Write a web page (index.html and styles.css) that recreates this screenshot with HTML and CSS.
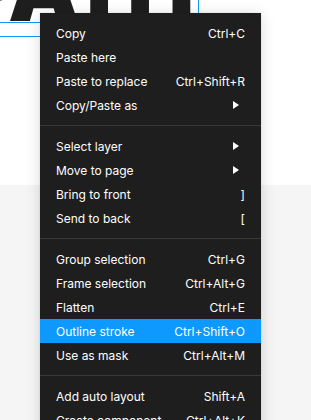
FILE: index.html
```html
<!DOCTYPE html>
<html lang="en">
<head>
    <meta charset="UTF-8">
    <meta name="viewport" content="width=device-width, initial-scale=1.0">
    <title>Context menu</title>
    <link rel="stylesheet" href="styles.css">
</head>
<body>
    <div class="frame">
        <div class="layer-text">PATH</div>
        <div class="selection"></div>
        <div class="baseline"></div>
    </div>
    <div class="page"></div>

    <div class="menu">
        <div class="item"><span>Copy</span><span class="key">Ctrl+C</span></div>
        <div class="item"><span>Paste here</span></div>
        <div class="item"><span>Paste to replace</span><span class="key">Ctrl+Shift+R</span></div>
        <div class="item"><span>Copy/Paste as</span><svg class="arrow" width="6" height="8" viewBox="0 0 6 8"><path d="M0 0L6 4L0 8Z"/></svg></div>
        <div class="sep"></div>
        <div class="item"><span>Select layer</span><svg class="arrow" width="6" height="8" viewBox="0 0 6 8"><path d="M0 0L6 4L0 8Z"/></svg></div>
        <div class="item"><span>Move to page</span><svg class="arrow" width="6" height="8" viewBox="0 0 6 8"><path d="M0 0L6 4L0 8Z"/></svg></div>
        <div class="item"><span>Bring to front</span><span class="key">]</span></div>
        <div class="item"><span>Send to back</span><span class="key">[</span></div>
        <div class="sep"></div>
        <div class="item"><span>Group selection</span><span class="key">Ctrl+G</span></div>
        <div class="item"><span>Frame selection</span><span class="key">Ctrl+Alt+G</span></div>
        <div class="item"><span>Flatten</span><span class="key">Ctrl+E</span></div>
        <div class="item active"><span>Outline stroke</span><span class="key">Ctrl+Shift+O</span></div>
        <div class="item"><span>Use as mask</span><span class="key">Ctrl+Alt+M</span></div>
        <div class="sep"></div>
        <div class="item"><span>Add auto layout</span><span class="key">Shift+A</span></div>
        <div class="item"><span>Create component</span><span class="key">Ctrl+Alt+K</span></div>
        <div class="item"><span>Detach instance</span><span class="key">Ctrl+Alt+B</span></div>
    </div>
</body>
</html>
```

FILE: styles.css
```css
body {
    margin: 0;
    width: 311px;
    height: 420px;
    overflow: hidden;
    position: relative;
    background-color: #f5f5f5;
    font-family: Inter, "Noto Sans", sans-serif;
}
.frame {
    position: relative;
    height: 185px;
    background: white;
    overflow: hidden;
}
.page {
    height: 235px;
}
.layer-text {
    position: absolute;
    left: -40px;
    top: -56px;
    font-size: 90px;
    line-height: 90px;
    font-weight: 900;
    letter-spacing: -3px;
    color: #1e1e1e;
    white-space: nowrap;
}
.selection {
    position: absolute;
    left: -10px;
    top: -60px;
    width: 207px;
    height: 95px;
    border: 1px solid #0d99ff;
}
.baseline {
    position: absolute;
    left: 0;
    top: 22px;
    width: 198px;
    height: 1px;
    background: #0d99ff;
}
.menu {
    position: absolute;
    left: 40px;
    top: 13px;
    width: 221px;
    padding: 8px 0;
    background: #1e1e1e;
    box-shadow: 0 2px 14px rgba(0,0,0,0.15), 0 0 1px rgba(0,0,0,0.2);
    color: #ffffff;
    font-size: 12px;
}
.item {
    display: flex;
    justify-content: space-between;
    align-items: center;
    height: 24px;
    padding: 0 16px;
}
.item.active {
    background: #0d99ff;
}
.arrow {
    fill: #ffffff;
    margin-right: 6px;
}
.sep {
    height: 1px;
    margin: 8px 0;
    background: #383838;
}
```
